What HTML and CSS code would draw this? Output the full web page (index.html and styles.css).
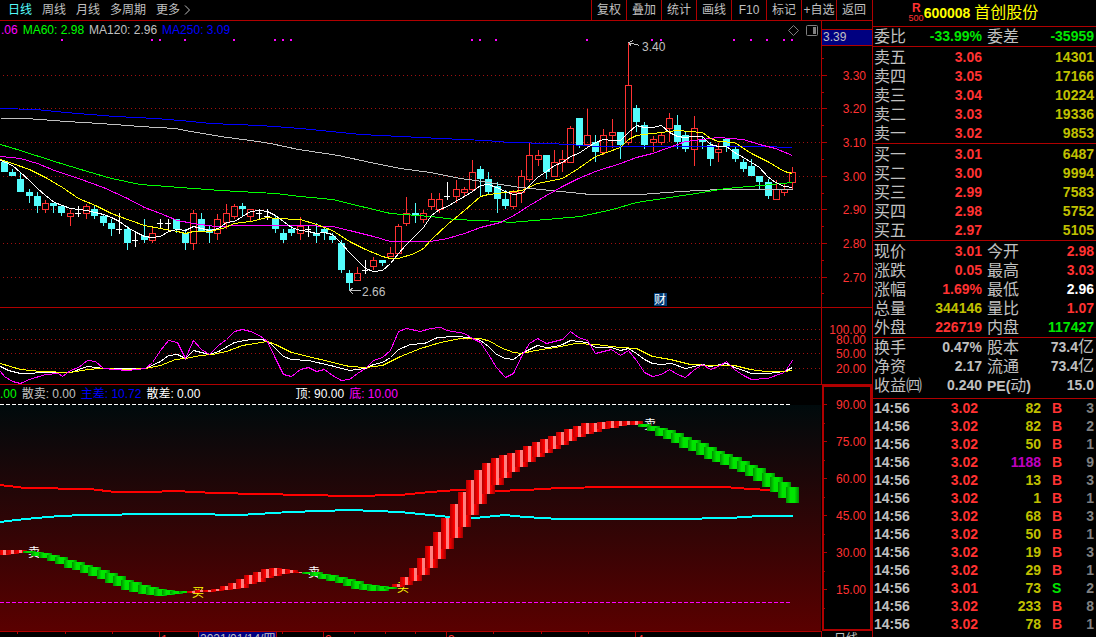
FILE: index.html
```html
<!DOCTYPE html>
<html lang="zh-CN">
<head>
<meta charset="utf-8">
<title>首创股份 600008</title>
<link rel="stylesheet" href="styles.css">
</head>
<body>
<div class="app">
  <main class="charts">
    <header class="topbar">
      <nav class="periods">
        <button class="period active">日线</button>
        <button class="period">周线</button>
        <button class="period">月线</button>
        <button class="period">多周期</button>
        <button class="period more">更多<svg class="chevron" viewBox="0 0 7 10"><path d="M1 0.5L5.5 5L1 9.5"/></svg></button>
      </nav>
      <div class="tools">
        <button class="tool">复权</button><button class="tool">叠加</button><button class="tool">统计</button><button class="tool">画线</button><button class="tool">F10</button><button class="tool">标记</button><button class="tool">+自选</button><button class="tool">返回</button>
      </div>
    </header>

    <section class="plot main-plot">
      <div class="legend overlay">
        <span class="magenta">.06</span><span class="lime">MA60: 2.98</span><span class="silver">MA120: 2.96</span><span class="blue">MA250: 3.09</span>
      </div>
      <svg id="price" class="canvas" viewBox="0 21 821 286"></svg>
    </section>
    <div class="axis main-axis"><svg id="price-axis" class="canvas" viewBox="822 21 50 286"></svg></div>

    <section class="plot"><svg id="kdj" class="canvas" viewBox="0 308 821 76"></svg></section>
    <div class="axis"><svg id="kdj-axis" class="canvas" viewBox="822 308 50 76"></svg></div>

    <section class="plot trend-plot">
      <div class="legend">
        <span class="lime">.00</span><span class="silver">散卖: 0.00</span><span class="blue">主差: 10.72</span><span class="white">散差: 0.00</span><span class="white spaced">顶: 90.00</span><span class="magenta">底: 10.00</span>
      </div>
      <svg id="trend" class="canvas" viewBox="0 403 821 228"></svg>
    </section>
    <div class="axis trend-axis"><svg id="trend-axis" class="canvas" viewBox="824 387 46 242"></svg></div>

    <div class="timeline"><svg id="time" class="canvas" viewBox="0 632 821 5"></svg></div>
    <div class="cycle">日线</div>
  </main>

  <aside class="quote">
    <h1 class="stock"><span class="badge"><b>R</b><small>500</small></span><span class="code">600008</span><span class="name">首创股份</span></h1>
    <table class="grid">
      <colgroup><col class="c-label"><col class="c-value"><col class="c-label2"><col></colgroup>
      <tbody>
        <tr><th>委比</th><td class="green">-33.99%</td><th>委差</th><td class="green">-35959</td></tr>
      </tbody>
    </table>
    <table class="grid book">
      <colgroup><col class="c-label"><col class="c-value"><col></colgroup>
      <tbody>
        <tr><th>卖五</th><td class="red">3.06</td><td class="olive">14301</td></tr>
        <tr><th>卖四</th><td class="red">3.05</td><td class="olive">17166</td></tr>
        <tr><th>卖三</th><td class="red">3.04</td><td class="olive">10224</td></tr>
        <tr><th>卖二</th><td class="red">3.03</td><td class="olive">19336</td></tr>
        <tr><th>卖一</th><td class="red">3.02</td><td class="olive">9853</td></tr>
      </tbody>
    </table>
    <table class="grid book">
      <colgroup><col class="c-label"><col class="c-value"><col></colgroup>
      <tbody>
        <tr><th>买一</th><td class="red">3.01</td><td class="olive">6487</td></tr>
        <tr><th>买二</th><td class="red">3.00</td><td class="olive">9994</td></tr>
        <tr><th>买三</th><td class="red">2.99</td><td class="olive">7583</td></tr>
        <tr><th>买四</th><td class="red">2.98</td><td class="olive">5752</td></tr>
        <tr><th>买五</th><td class="red">2.97</td><td class="olive">5105</td></tr>
      </tbody>
    </table>
    <table class="grid book">
      <colgroup><col class="c-label"><col class="c-value"><col class="c-label2"><col></colgroup>
      <tbody>
        <tr><th>现价</th><td class="red">3.01</td><th>今开</th><td class="red">2.98</td></tr>
        <tr><th>涨跌</th><td class="red">0.05</td><th>最高</th><td class="red">3.03</td></tr>
        <tr><th>涨幅</th><td class="red">1.69%</td><th>最低</th><td class="white">2.96</td></tr>
        <tr><th>总量</th><td class="olive">344146</td><th>量比</th><td class="red">1.07</td></tr>
        <tr><th>外盘</th><td class="red">226719</td><th>内盘</th><td class="green">117427</td></tr>
      </tbody>
    </table>
    <table class="grid basics">
      <colgroup><col class="c-label"><col class="c-value"><col class="c-label2"><col></colgroup>
      <tbody>
        <tr><th>换手</th><td>0.47%</td><th>股本</th><td>73.4<i>亿</i></td></tr>
        <tr><th>净资</th><td>2.17</td><th>流通</th><td>73.4<i>亿</i></td></tr>
        <tr><th>收益㈣</th><td>0.240</td><th><b>PE(</b>动<b>)</b></th><td>15.0</td></tr>
      </tbody>
    </table>
    <table class="ticks">
      <colgroup><col class="t-time"><col class="t-price"><col class="t-vol"><col class="t-side"><col></colgroup>
      <tbody id="ticks"></tbody>
    </table>
  </aside>
</div>
<script src="charts.js"></script>
</body>
</html>
```

FILE: styles.css
```css
* { box-sizing: border-box; }

body {
  margin: 0;
  background: #000;
  color: #c0c0c0;
  font: 12px/18px "Liberation Sans", "Noto Sans CJK SC", sans-serif;
}

button {
  margin: 0;
  padding: 0;
  border: 0;
  background: none;
  color: inherit;
  font: inherit;
  white-space: nowrap;
}

.app {
  display: grid;
  grid-template-columns: minmax(0, 1fr) 224px;
  height: 100vh;
  overflow: hidden;
}

/* chart side */
.charts {
  display: grid;
  grid-template-columns: minmax(0, 1fr) 51px;
  grid-template-rows: 21px minmax(0, 287fr) minmax(0, 77fr) minmax(0, 246fr) 6px;
  min-height: 0;
}

.topbar {
  grid-column: 1 / -1;
  display: flex;
  justify-content: space-between;
  padding-right: 1px;
  border-bottom: 1px solid #b00000;
}

.periods { display: flex; gap: 10px; padding-left: 8px; }
.period { line-height: 20px; }
.period.active { color: #54fcfc; }
.more { display: flex; align-items: center; gap: 4px; }
.chevron { width: 7px; height: 10px; }
.chevron path { fill: none; stroke: #c0c0c0; }

.tools { display: flex; }
.tool { width: 35px; line-height: 20px; border-left: 1px solid #b00000; }

.plot { position: relative; min-height: 0; border-bottom: 1px solid #b00000; }
.axis { min-height: 0; border-left: 1px solid #b00000; border-bottom: 1px solid #b00000; }
.canvas { display: block; width: 100%; height: 100%; overflow: hidden; }

.trend-plot { display: flex; flex-direction: column; border-bottom: 0; }
.trend-plot .canvas { flex: 1; min-height: 0; }
.trend-axis { border: 2px solid #b00000; margin-left: 1px; }

.legend { display: flex; gap: 5px; line-height: 18px; white-space: nowrap; }
.overlay { position: absolute; top: 0; left: 0; padding-left: 1px; }
.spaced { margin-left: 90px; }

.timeline { overflow: hidden; border-top: 1px solid #b00000; }
.cycle {
  overflow: hidden;
  border-left: 1px solid #b00000;
  padding-left: 12px;
  line-height: 16px;
}

/* colours */
.magenta { color: #f0f; }
.lime { color: #0f0; }
.silver { color: #c0c0c0; }
.blue { color: #00f; }
.white { color: #fff; }
.red { color: #ff3232; }
.green { color: #00e600; }
.olive { color: #c0c000; }
.purple { color: #c000c0; }
.gray { color: #808080; }

/* svg parts */
.shape { shape-rendering: crispEdges; fill: none; }
.grid-line { stroke: #a01010; stroke-dasharray: 1 3; }
.tick-mark { stroke: #b00000; }
.label { fill: #ff3232; font-size: 12px; }
.label-end { text-anchor: end; }
.label-note { fill: #c0c0c0; }
.mark { font-size: 12px; text-anchor: middle; }

/* quote side */
.quote {
  border-left: 1px solid #b00000;
  font-size: 14px;
  font-weight: bold;
  overflow: hidden;
}

.stock {
  display: flex;
  justify-content: center;
  align-items: center;
  height: 27px;
  margin: 0;
  padding-right: 22px;
  border-bottom: 1px solid #b00000;
  color: #ff0;
  font-size: 14px;
  line-height: 26px;
}
.badge { display: flex; flex-direction: column; align-items: flex-end; color: #ff3232; line-height: 10px; }
.badge b { padding-right: 3px; font-size: 12px; }
.badge small { font-size: 9px; font-weight: 400; }
.name { margin-left: 4px; font-size: 16px; font-weight: 400; }

table { width: 100%; table-layout: fixed; border-spacing: 0; }
th, td { padding: 0; white-space: nowrap; text-align: right; }
th { text-align: left; font-size: 16px; font-weight: 400; }
th b { font-size: 14px; font-weight: bold; line-height: 0; }
i { font-size: 16px; font-weight: 400; font-style: normal; line-height: 0; }

.grid { border-bottom: 1px solid #b00000; padding: 0 2px 0 1px; }
.grid th, .grid td { height: 19px; line-height: 19px; }
.grid th:nth-child(3) { padding-left: 5px; }
.book { padding-top: 1px; }
.basics { padding-bottom: 3px; }
.c-label { width: 48px; }
.c-value { width: 60px; }
.c-label2 { width: 53px; }

.ticks { padding: 0 2px 0 1px; }
.ticks td { height: 18px; line-height: 18px; }
.ticks td:first-child { text-align: left; }
.ticks td:nth-child(4) { padding-left: 11px; text-align: left; }
.t-time { width: 48px; }
.t-price { width: 56px; }
.t-vol { width: 63px; }
.t-side { width: 30px; }
```

FILE: charts.js
```js
const NS = "http://www.w3.org/2000/svg";
const PITCH = 8.21;
const barX = i => Math.round(4 + PITCH * i);

function add(parent, tag, attrs, text) {
  const el = document.createElementNS(NS, tag);
  for (const k in attrs) el.setAttribute(k, attrs[k]);
  if (text) el.textContent = text;
  parent.appendChild(el);
  return el;
}
const rect = (p, x, y, w, h, fill) => add(p, "rect", { x, y, width: w, height: h, class: "shape", style: "fill:" + fill });
const hline = (p, x1, x2, y, cls) => add(p, "line", { x1, x2, y1: y + 0.5, y2: y + 0.5, class: "shape " + cls });
function curve(p, color, width, data) {
  const n = data.trim().split(/\s+/).map(s => s.split(",").map(Number));
  const o = width % 2 ? 0.5 : 0;
  add(p, "polyline", { points: n.map(q => (q[0] + o) + "," + (q[1] + o)).join(" "), stroke: color, "stroke-width": width, class: "shape" });
}

/* price chart */
const price = document.getElementById("price");
[75, 108, 142, 176, 209, 243, 277].forEach(y => hline(price, 3, 821, y, "grid-line"));

/* kind, high, top, bottom, low */
const candles = `d160,162,172,172 d169,172,176,176 d172,179,192,192 d189,192,196,203 d192,196,206,213 u200,203,210,213
d203,203,206,213 d205,206,213,216 u210,213,217,226 x206,213,213,216 u204,206,214,219 d206,209,216,219
d215,216,223,226 d219,223,229,236 x213,229,229,233 d226,229,243,250 x233,240,240,246 d219,236,240,243
u228,233,241,243 x219,223,223,228 x219,223,223,230 d219,219,229,233 d229,233,243,250 u210,213,244,250
d213,219,232,232 d226,229,233,243 u214,219,234,240 u204,213,223,229 u204,206,217,219 d203,206,209,216
u209,209,217,222 x209,213,213,219 x209,216,216,219 d216,219,229,233 d229,233,240,243 d226,229,233,236
u217,226,234,240 x226,229,229,236 d223,233,236,243 d226,229,233,240 d233,236,240,243 d240,243,270,273
d270,273,283,290 u267,273,281,281 x260,270,270,273 u257,260,267,270 d260,260,263,266 u247,253,257,257
u224,226,254,254 u197,213,224,226 d203,213,216,223 u210,213,220,223 u193,199,207,210 u193,199,210,213
x182,196,196,199 u180,189,197,203 u187,189,193,196 u160,172,190,192 d166,169,179,196 d172,179,192,195
d182,186,199,213 d190,199,206,209 u190,192,207,209 u170,176,193,203 u143,155,180,182 u150,155,160,166
d155,155,172,179 u150,162,177,177 u150,159,163,172 u126,128,163,163 d118,118,145,148 u109,135,145,148
d135,142,152,162 u129,135,153,155 u119,132,136,148 d132,132,145,159 u42,85,143,145 d105,108,122,132
d122,125,145,149 u136,139,143,152 u132,135,143,145 u113,118,129,142 d115,125,142,149 d132,135,149,152
u116,128,150,166 d136,139,142,149 d142,145,159,166 u143,149,153,162 d139,139,146,152 d146,149,159,162
d159,162,169,172 d159,166,176,176 d176,176,182,189 d179,182,196,199 u180,189,200,200 u184,189,193,196
u167,172,183,189`.split(/\s+/);
candles.forEach((c, i) => {
  const [hi, top, bot, lo] = c.slice(1).split(",").map(Number), x = barX(i);
  if (c[0] === "d") {
    rect(price, x, hi, 1, lo - hi, "#54fcfc");
    rect(price, x - 3, top, 7, bot - top, "#54fcfc");
  } else if (c[0] === "x") {
    rect(price, x, hi, 1, lo - hi + 1, "#fff");
    rect(price, x - 3, top, 6, 1, "#fff");
  } else {
    rect(price, x, hi, 1, top - hi, "#ff3232");
    rect(price, x, bot, 1, lo - bot, "#ff3232");
    add(price, "rect", { x: x - 2.5, y: top + 0.5, width: 6, height: Math.max(2, bot - top - 1), stroke: "#ff3232", class: "shape" });
  }
});

curve(price, "#0000ff", 1, "0,108 35,109 65,112 115,116 155,118 180,120 210,123 260,125 300,128 360,134 440,138 485,140 510,142 550,143 600,146 760,146 792,147");
curve(price, "#c0c0c0", 1, "0,118 26,118 66,121 100,123 140,126 175,128 190,131 220,136 250,140 270,143 298,149 338,155 370,162 400,168 430,172 460,178 482,181 500,184 520,187 550,190 590,194 640,194 680,191 720,189 792,189");
curve(price, "#00ff00", 1, "0,144 20,150 54,161 87,171 111,178 140,184 180,187 220,190 275,193 300,196 332,199 365,207 390,213 430,216 455,219 500,221 510,222 546,219 580,216 612,209 636,202 669,197 702,192 726,188 760,185 792,182");
curve(price, "#ff00ff", 1, "0,156 20,158 37,163 54,170 78,178 103,187 127,198 144,207 160,213 177,220 193,223 215,226 240,225 300,225 332,226 349,230 373,236 390,241 430,241 447,238 464,233 480,227 500,222 515,214 529,205 546,195 562,186 578,178 595,171 620,163 636,157 652,153 669,147 685,141 702,139 718,137 743,139 759,144 775,148 792,155");
curve(price, "#ffff00", 1, "0,159 12,163 29,169 45,177 62,187 78,198 95,205 111,213 127,219 144,225 160,228 177,231 185,233 193,231 209,231 222,228 234,223 250,221 267,217 275,218 300,219 316,224 332,230 349,241 365,249 382,256 390,258 398,258 414,253 423,248 431,239 447,224 464,210 480,196 488,194 505,192 521,190 537,183 562,178 578,168 595,156 620,147 628,139 636,135 652,133 677,130 702,132 710,138 718,141 734,142 751,153 767,161 784,171 792,173");
curve(price, "#ffffff", 1, "0,160 5,162 12,165 20,172 29,180 37,188 45,195 54,202 62,205 70,208 78,209 86,210 95,212 103,214 111,217 119,221 127,227 136,232 144,236 152,237 160,236 168,231 177,229 185,230 193,226 201,228 209,230 218,228 226,222 234,221 242,216 250,211 259,210 267,211 275,215 283,221 291,227 300,230 308,231 316,233 324,232 332,234 341,243 349,252 357,260 365,268 373,271 382,270 390,263 398,253 406,244 414,236 423,227 431,215 439,209 447,206 455,201 464,196 472,191 480,185 488,184 496,187 505,191 513,194 521,193 529,185 537,177 546,171 554,165 562,162 570,156 578,153 587,147 595,142 603,139 611,140 620,140 628,132 636,125 644,127 652,127 661,125 669,132 677,136 685,137 693,136 702,136 710,144 718,146 726,146 734,152 743,157 751,162 759,167 767,176 775,182 784,186 792,187");

[62, 152, 160, 185, 234, 275, 283, 291, 472, 480, 496, 587, 652, 661, 734, 751, 767, 784, 792].forEach(x => rect(price, x - 1, 39, 2, 2, "#f0f"));

curve(price, "#c0c0c0", 1, "633,40 628,42 631,46");
curve(price, "#c0c0c0", 1, "628,42 639,45");
add(price, "text", { x: 642, y: 51, class: "label label-note" }, "3.40");
curve(price, "#c0c0c0", 1, "353,287 349,290 353,294");
curve(price, "#c0c0c0", 1, "349,290 360,290");
add(price, "text", { x: 362, y: 296, class: "label label-note" }, "2.66");
rect(price, 654, 293, 13, 13, "#003c78");
add(price, "text", { x: 660, y: 304, class: "mark", fill: "#fff" }, "财");

add(price, "path", { d: "M793.5 25.5L798.5 30.5L793.5 35.5L788.5 30.5Z", fill: "none", stroke: "#808080" });
add(price, "rect", { x: 806.5, y: 25.5, width: 11, height: 10, rx: 1, fill: "none", stroke: "#808080" });
rect(price, 813, 27, 3, 7, "#808080");

/* price scale */
const pa = document.getElementById("price-axis");
[["3.30", 75], ["3.20", 108], ["3.10", 142], ["3.00", 176], ["2.90", 209], ["2.80", 243], ["2.70", 277]].forEach(([t, y]) => {
  hline(pa, 822, 827, y, "tick-mark");
  add(pa, "text", { x: 866, y: y + 5, class: "label label-end" }, t);
});
[58, 92, 125, 159, 193, 226, 260, 293].forEach(y => hline(pa, 822, 824, y, "tick-mark"));
rect(pa, 822, 30, 50, 15, "#000080");
hline(pa, 822, 872, 29, "tick-mark");
hline(pa, 822, 872, 45, "tick-mark");
add(pa, "text", { x: 823, y: 41, class: "label label-note" }, "3.39");

/* oscillator */
const kdj = document.getElementById("kdj"), ka = document.getElementById("kdj-axis");
[["100.00", 329], ["80.00", 339], ["50.00", 353], ["20.00", 368]].forEach(([t, y]) => {
  hline(kdj, 3, 821, y, "grid-line");
  add(ka, "text", { x: 866, y: y + 5, class: "label label-end" }, t);
});
curve(kdj, "#ffffff", 1, "0,366 8,370 20,373 50,372 70,372 87,366 103,368 145,368 160,361 168,355 177,354 185,358 193,350 209,354 218,351 234,342 250,339 262,339 270,343 283,356 291,359 308,360 330,365 349,370 365,368 373,364 382,362 390,357 398,349 410,344 424,343 437,337 455,336 470,337 480,340 488,346 496,354 505,358 513,359 521,353 529,349 537,345 546,347 555,346 562,344 570,340 587,342 595,347 611,347 620,350 628,348 636,353 644,359 652,363 661,364 671,363 685,368 702,364 710,366 726,363 734,367 743,370 751,373 767,373 784,371 792,367");
curve(kdj, "#ffff00", 1, "0,363 20,369 40,371 70,372 87,369 100,368 127,369 145,368 160,365 175,359 185,358 200,355 212,354 226,351 242,345 267,341 275,344 291,352 320,359 349,366 365,367 382,365 400,356 420,348 440,342 460,338 480,338 490,341 500,347 513,352 521,353 535,350 555,347 575,343 595,344 620,347 636,348 652,356 670,359 690,364 710,365 734,365 750,369 765,371 784,371 792,370");
curve(kdj, "#ff00ff", 1, "0,371 4,376 12,381 20,383 29,379 45,374 58,373 62,376 70,370 78,367 87,360 95,361 103,368 127,370 145,368 152,362 160,350 168,340 177,342 185,358 193,340 201,349 209,354 218,345 226,339 234,331 242,329 250,331 259,335 267,341 275,358 283,374 291,376 300,369 308,367 316,371 324,369 332,375 341,380 349,379 357,373 365,368 373,360 382,357 390,350 398,331 406,328 420,331 430,328 440,327 447,330 464,333 472,338 480,342 488,354 496,367 505,377 513,373 521,356 529,343 537,338 546,343 562,339 570,331 578,337 587,340 595,353 611,349 620,355 628,350 636,360 644,372 652,376 661,374 669,369 677,374 685,377 693,370 702,364 710,369 718,366 726,361 734,369 743,375 751,379 767,378 784,372 792,360");

/* trend ribbon */
const trend = document.getElementById("trend");
function gradient(id, vertical, stops) {
  const g = add(trend, "linearGradient", vertical ? { id, x1: 0, y1: 0, x2: 0, y2: 1 } : { id });
  stops.forEach(([offset, color]) => add(g, "stop", { offset, "stop-color": color }));
}
gradient("sky", true, [[0, "#000a0c"], [1, "#5a0000"]]);
gradient("rise", false, [[0, "#b40000"], [0.35, "#ff0000"], [0.36, "#ff8080"], [0.64, "#ff8080"], [0.65, "#ff0000"], [1, "#a00000"]]);
gradient("fall", false, [[0, "#008c00"], [0.35, "#00e600"], [0.65, "#00e600"], [1, "#008c00"]]);
rect(trend, 0, 405, 821, 226, "url(#sky)");
add(trend, "line", { x1: 0, x2: 792, y1: 404.5, y2: 404.5, stroke: "#fff", "stroke-dasharray": "4 2", class: "shape" });
add(trend, "line", { x1: 0, x2: 792, y1: 602.5, y2: 602.5, stroke: "#f0f", "stroke-dasharray": "4 2", class: "shape" });
curve(trend, "#ff0000", 2, "0,485 25,488 90,489 115,492 150,492 175,491 215,493 260,494 350,496 400,495 430,492 457,490 495,491 525,490 560,488 610,487 725,487 750,489 790,491");
curve(trend, "#00ffff", 2, "0,522 25,519 60,516 85,515 115,515 130,514 190,514 240,515 290,512 350,510 400,512 420,514 450,517 475,518 505,515 525,517 560,519 675,519 730,518 760,516 793,516");

/* bar index, kind, then top-bottom of each consecutive bar */
const ribbon = [
  [0, "rise", "550-555 550-554 550-553 551-552"],
  [3, "fall", "551-553 552-556 553-558 555-561 557-564 560-568 562-570 565-573 567-576 570-579 573-583 576-586 580-590 582-592 585-594 587-595 589-596 590-595 591-594 591-593"],
  [23, "rise", "591-593 590-592 590-592 589-591 586-590 583-589 579-588 575-584 572-582 569-578 568-576 569-574 570-573 572-573"],
  [37, "fall", "572-574 572-576 574-579 575-581 577-583 579-586 581-589 584-590 585-591 586-591 587-589"],
  [48, "rise", "584-587 577-585 568-581 558-575 546-568 532-559 518-549 504-538 492-527 480-515 470-504 463-494 458-485 455-478 453-472 450-467 446-462 442-457 439-453 436-449 432-445 429-441 426-437 423-434 423-432 422-429 421-428 421-426 421-425 421-425"],
  [78, "fall", "424-427 426-431 428-436 430-439 433-443 437-448 440-451 443-455 447-459 451-462 454-465 457-469 461-472 465-476 468-481 473-487 477-492 482-498 487-503"]
];
/* signal characters sit beneath the ribbon */
[["卖", 34, 557, "#fff"], ["买", 198, 597, "#ff0"], ["卖", 314, 577, "#fff"], ["买", 403, 592, "#ff0"], ["卖", 650, 429, "#fff"]]
  .forEach(([t, x, y, fill]) => add(trend, "text", { x, y, fill, class: "mark" }, t));
ribbon.forEach(([start, kind, bars]) => bars.split(" ").forEach((b, k) => {
  const [t, e] = b.split("-").map(Number);
  rect(trend, barX(start + k) - 6, t, 13, e - t, `url(#${kind})`);
}));

const ta = document.getElementById("trend-axis");
[["90.00", 404], ["75.00", 441], ["60.00", 478], ["45.00", 515], ["30.00", 552], ["15.00", 589]].forEach(([t, y]) => {
  hline(ta, 822, 827, y, "tick-mark");
  hline(ta, 822, 825, y + 19, "tick-mark");
  add(ta, "text", { x: 866, y: y + 5, class: "label label-end" }, t);
});

/* date strip */
const time = document.getElementById("time");
[17, 65, 112, 282, 354, 385, 415, 493, 541, 588].forEach(x => rect(time, x, 632, 1, 2, "#b00000"));
[[159, "1"], [323, "2"], [446, "3"], [635, "4"]].forEach(([x, t]) => {
  rect(time, x, 632, 1, 5, "#b00000");
  add(time, "text", { x: x + 2, y: 644, class: "label" }, t);
});
rect(time, 198, 632, 79, 5, "#b00000");
rect(time, 199, 632, 77, 5, "#000080");
add(time, "text", { x: 200, y: 643, class: "label label-note" }, "2021/01/14/四");

/* trades */
const trades = [["3.02", 82, "B", 3], ["3.02", 82, "B", 2], ["3.02", 50, "B", 1], ["3.02", 1188, "B", 9], ["3.02", 13, "B", 3], ["3.02", 1, "B", 1], ["3.02", 68, "B", 3], ["3.02", 50, "B", 1], ["3.02", 19, "B", 3], ["3.02", 29, "B", 1], ["3.01", 73, "S", 2], ["3.02", 233, "B", 8], ["3.02", 78, "B", 1]];
document.getElementById("ticks").innerHTML = trades.map(([p, v, s, n]) =>
  `<tr><td>14:56</td><td class="red">${p}</td><td class="${v > 500 ? "purple" : "olive"}">${v}</td><td class="${s === "B" ? "red" : "green"}">${s}</td><td class="gray">${n}</td></tr>`).join("");
```
